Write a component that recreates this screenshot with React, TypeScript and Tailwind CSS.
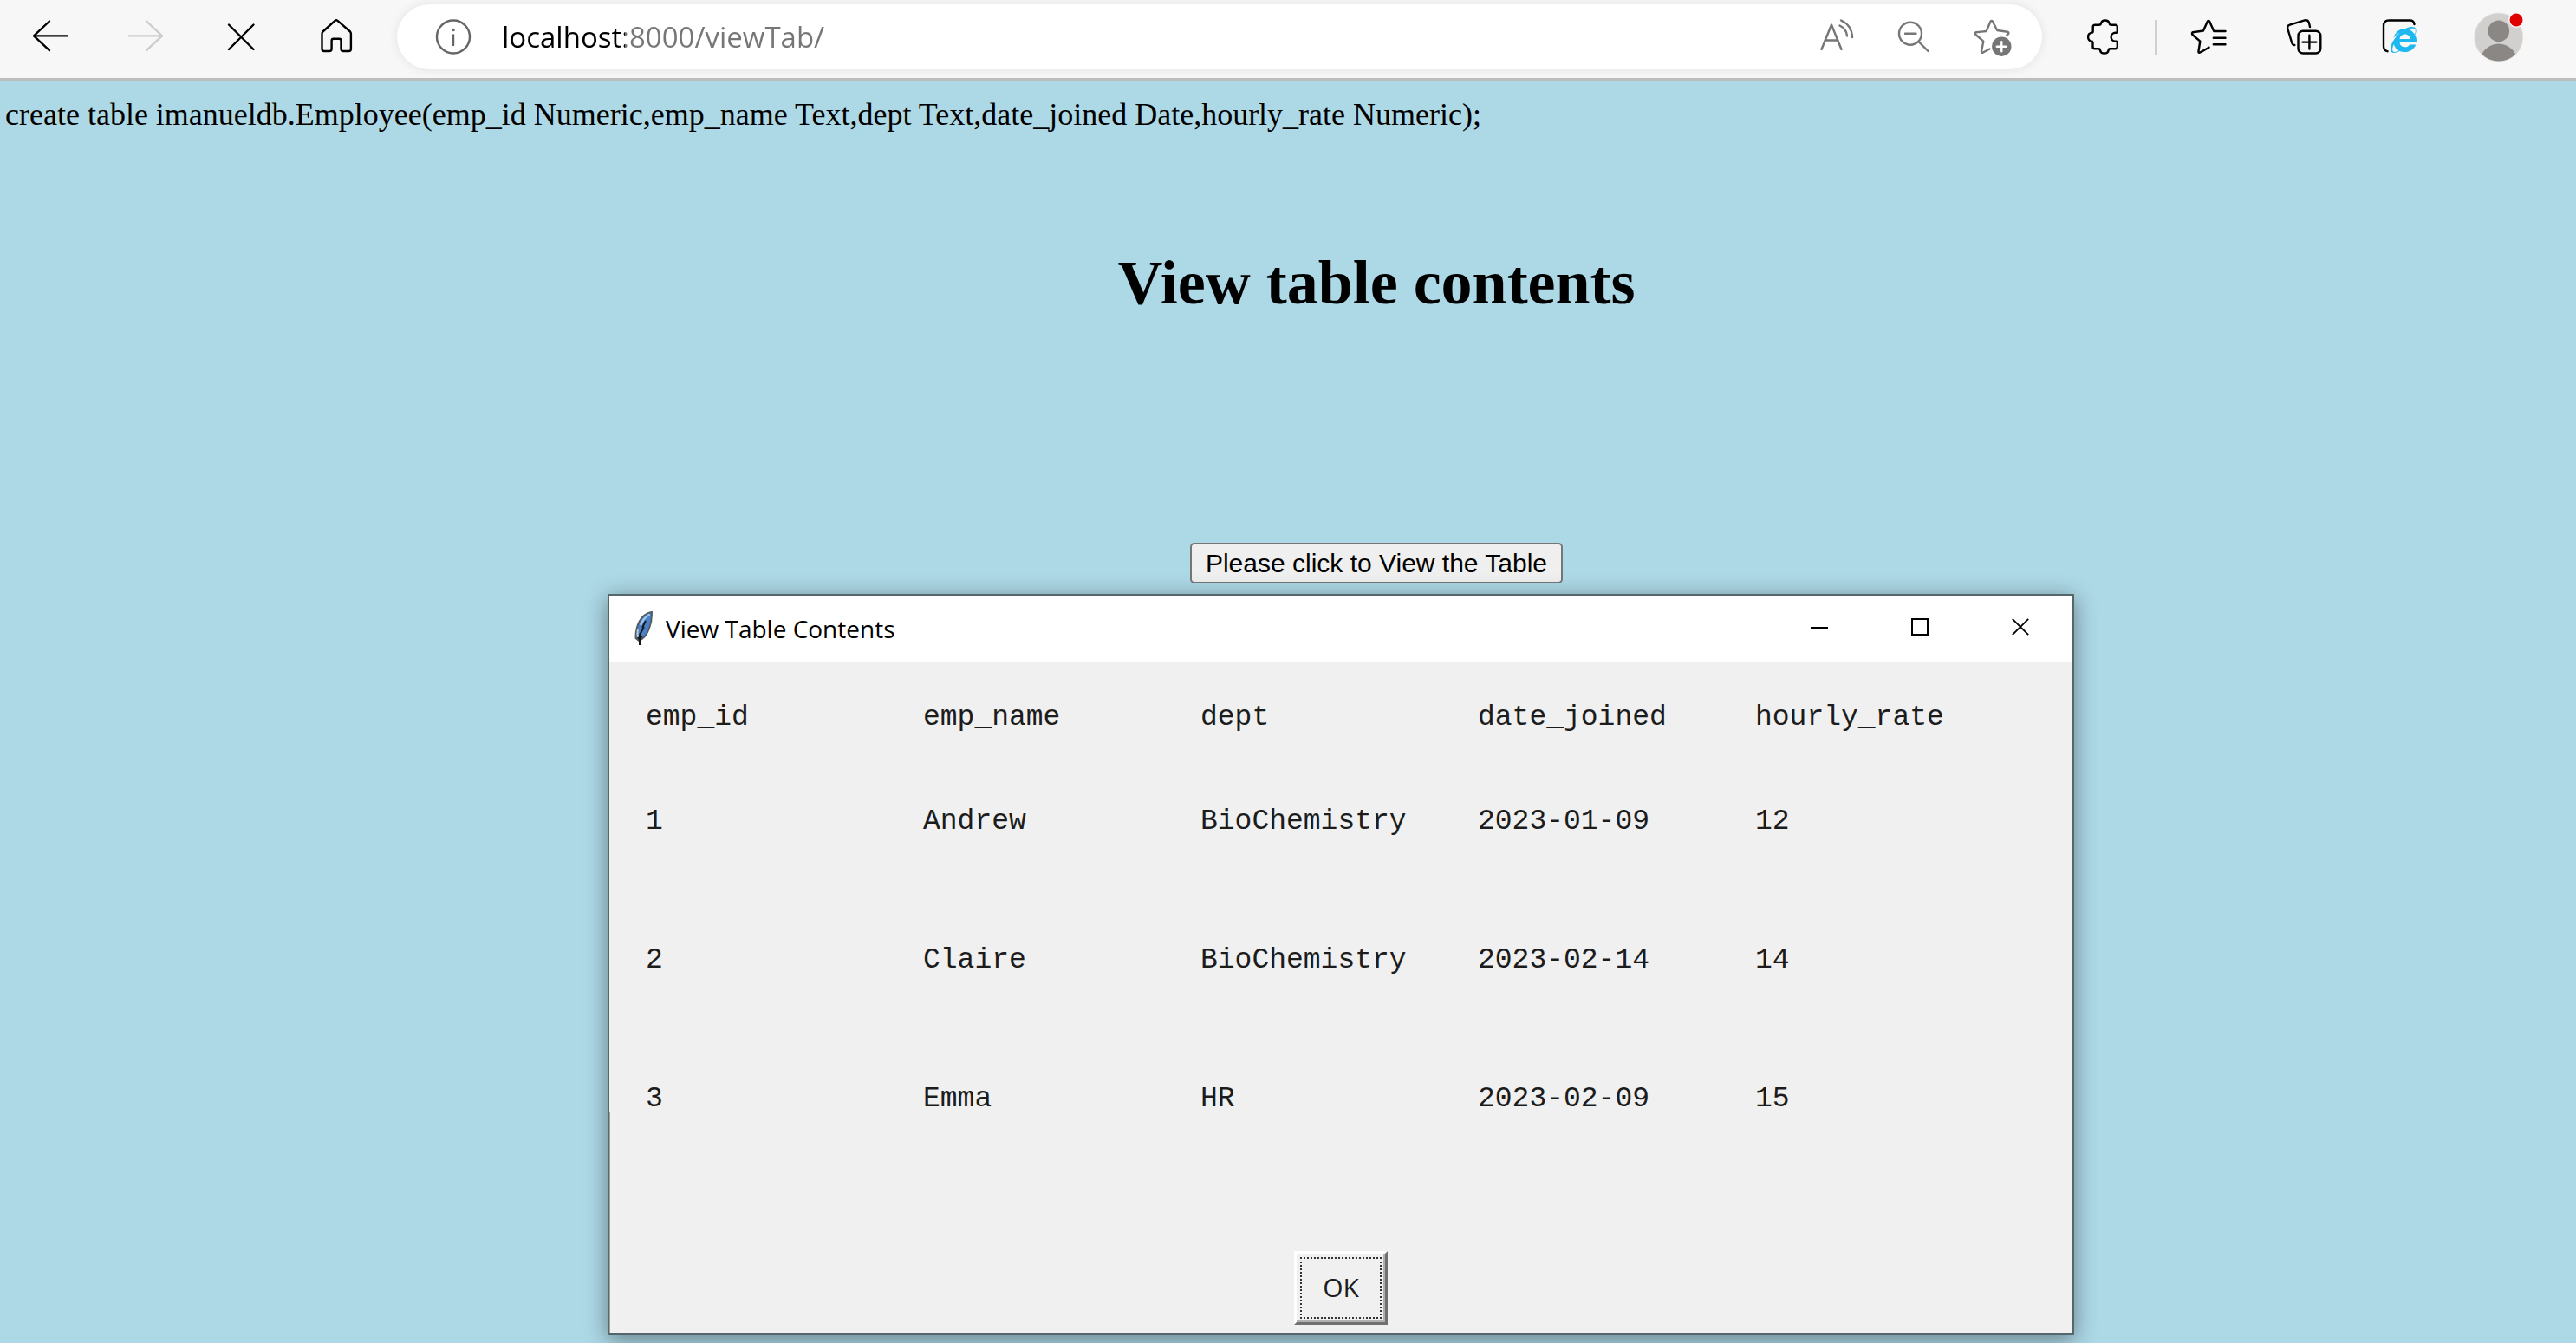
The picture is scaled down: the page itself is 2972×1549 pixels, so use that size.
import type { ReactNode } from "react";
import { FaInternetExplorer } from "react-icons/fa";

const COLUMNS = ["emp_id", "emp_name", "dept", "date_joined", "hourly_rate"];

const ROWS = [
  ["1", "Andrew", "BioChemistry", "2023-01-09", "12"],
  ["2", "Claire", "BioChemistry", "2023-02-14", "14"],
  ["3", "Emma", "HR", "2023-02-09", "15"],
];

function Glyph({ children }: { children: ReactNode }) {
  return (
    <svg
      viewBox="0 0 60 75"
      className="h-[75px] w-[60px] shrink-0"
      fill="none"
      stroke="currentColor"
      strokeWidth="2.4"
      strokeLinecap="round"
      strokeLinejoin="round"
      aria-hidden="true"
    >
      {children}
    </svg>
  );
}

function ToolButton({ label, disabled, children }: { label: string; disabled?: boolean; children: ReactNode }) {
  return (
    <button
      type="button"
      aria-label={label}
      disabled={disabled}
      className="flex w-[110px] shrink-0 justify-center text-black disabled:text-[#cccccc]"
    >
      <Glyph>{children}</Glyph>
    </button>
  );
}

function PillButton({ label, children }: { label: string; children: ReactNode }) {
  return (
    <button type="button" aria-label={label} className="flex w-[90px] shrink-0 justify-center text-[#767676]">
      <Glyph>{children}</Glyph>
    </button>
  );
}

function AddressBar() {
  return (
    <div className="ml-[15px] mr-4 flex min-w-0 flex-1 items-center rounded-full bg-white pl-[35px] pr-[13px] shadow-[0_0_12px_rgba(0,0,0,0.09)]">
      <button type="button" aria-label="View site information" className="text-[#666666]">
        <Glyph>
          <circle cx="30" cy="37.5" r="19" />
          <circle cx="30" cy="29.5" r="1.8" fill="currentColor" stroke="none" />
          <path d="M30 35.5V47" />
        </Glyph>
      </button>
      <input
        type="text"
        aria-label="Address"
        defaultValue="localhost:8000/viewTab/"
        className="ml-[26px] min-w-0 flex-1 bg-[linear-gradient(90deg,#000_142px,#767676_142px)] bg-clip-text font-['Open_Sans',sans-serif] text-[33px] leading-[48px] text-transparent outline-none"
      />
      <PillButton label="Read aloud">
        <path d="M13.5 52L25 23.5L36.5 52M17.5 41.5H32.5" />
        <path d="M34.5 24.5Q42.5 28.5 43 36.5M36 18.5Q48.500 24 49 38" />
      </PillButton>
      <PillButton label="Zoom out">
        <circle cx="26" cy="33.7" r="13" />
        <path d="M20 33.700H32.500M35.500 43L46.500 54" />
      </PillButton>
      <PillButton label="Add to favorites">
        <path d="M47.5 35.3L49.2 34Q49.8 32 48 31.700L36.200 30L31 19.800Q29.700 18.200 28.500 19.800L23.700 31L12 32.200Q10 33 11.500 35L20.300 42.700L18 54.500Q18.300 56.500 20 55.500L27.500 51.500" />
        <circle cx="41.300" cy="48.700" r="11.200" fill="currentColor" stroke="none" />
        <path d="M35.800 48.700H46.800M41.300 43.200V54.200" stroke="#ffffff" />
      </PillButton>
    </div>
  );
}

function BrowserToolbar() {
  return (
    <header className="flex shrink-0 border-b-[3px] border-[#bcbebd] bg-[#f7f7f7] pb-[10px] pl-[3px] pr-[34px] pt-[5px]">
      <ToolButton label="Back">
        <path d="M49.500 36.400H11M29 19.500L11 36.400L29 53.200" />
      </ToolButton>
      <ToolButton label="Forward" disabled>
        <path d="M11 36.400H49M31 19.500L49 36.400L31 53.200" />
      </ToolButton>
      <ToolButton label="Stop">
        <path d="M16 23.500L44.500 52M44.500 23.500L16 52" />
      </ToolButton>
      <ToolButton label="Home">
        <path d="M28.500 18.900Q30 17.700 31.500 18.900L46 31.500Q46.900 32.500 46.900 34V51.500Q46.900 54 44.400 54H38Q35.500 54 35.500 51.500V42Q35.500 39.800 33.300 39.800H26.800Q24.600 39.800 24.600 42V51.500Q24.600 54 22 54H16Q13.500 54 13.500 51.500V34Q13.500 32.500 14.500 31.500Z" />
      </ToolButton>

      <AddressBar />

      <ToolButton label="Extensions">
        <path d="M20 23.700H24.500Q26.800 23.700 27 21.900A4.900 4.300 0 0 1 36.600 21.900Q36.800 23.700 39 23.700H43.500Q45.800 23.700 45.800 26V32.800H43.500A4.900 4.900 0 0 0 43.500 42.600H45.800V49Q45.800 51.300 43.500 51.300H37.500Q35.600 51.300 35.600 53.200A4.900 4.300 0 0 1 26 53.200Q26 51.300 24 51.300H19.800Q17.500 51.300 17.500 49V44.500Q17.500 42.500 15.800 42.400A4.300 4.800 0 0 1 15.800 32.900Q17.700 32.700 17.700 31V26Q17.700 23.700 20 23.700Z" />
      </ToolButton>
      <div className="mx-1 h-10 w-[3px] shrink-0 self-center bg-[#d0d0d0]" />
      <ToolButton label="Favorites">
        <path d="M49.500 31H36.200L31.200 19.800Q30 18.200 28.800 19.800L24 30.500L12 32.200Q10.200 33 11.500 35L20.300 42.700L18.400 54.500Q18.500 56.500 20.300 55.500L30.500 49.700M35.800 38.700H49.500M35.800 46.300H49.500" />
      </ToolButton>
      <ToolButton label="Collections">
        <rect x="23.500" y="30.700" width="25.800" height="25.800" rx="5.500" />
        <path d="M28.500 43.600H44.300M36.400 35.800V51.500" />
        <path d="M19.300 47Q17 47 16.200 44.500L11.400 28.500Q10.300 24.800 13.700 23.700L31 18.400Q34.600 17.600 35.800 20.800L37 26" />
      </ToolButton>
      <ToolButton label="Internet Explorer mode">
        <path d="M47.500 23Q47 18.500 42.500 18.500H18Q12 18.500 12 24.500V48.500Q12 53 16.500 54.200" />
        <FaInternetExplorer x={20} y={26} size={30} color="#1db8f0" stroke="none" />
      </ToolButton>
      <button type="button" aria-label="Profile" className="ml-[5px] flex w-[110px] shrink-0 justify-center">
        <svg viewBox="0 0 60 75" className="h-[75px] w-[60px]" aria-hidden="true">
          <defs>
            <clipPath id="avatar">
              <circle cx="29.800" cy="38" r="27.500" />
            </clipPath>
          </defs>
          <circle cx="29.800" cy="38" r="28" fill="#d2d0ce" stroke="#e4e3e2" />
          <g clipPath="url(#avatar)" fill="#8a8785">
            <circle cx="29.800" cy="30.700" r="12.300" />
            <ellipse cx="29.800" cy="68" rx="22" ry="22.500" />
          </g>
          <circle cx="50" cy="18" r="9" fill="#f7f7f7" />
          <circle cx="50" cy="18" r="7.500" fill="#e00000" />
        </svg>
      </button>
    </header>
  );
}

function Feather() {
  return (
    <svg viewBox="0 0 24 40" className="h-10 w-6 shrink-0" aria-hidden="true">
      <path d="M20 0.800Q11 2.500 6 11Q1 20 1.500 31L5 34Q13 31 17 20Q20.500 11 20 0.800Z" fill="#4a80c4" stroke="#55585e" strokeWidth="1.800" />
      <path d="M17.500 3.500Q10 8 7 16" fill="none" stroke="#9cc4ee" strokeWidth="2.500" />
      <path d="M3.800 21Q3 26 4 30" fill="none" stroke="#b9c9d8" strokeWidth="2" />
      <path d="M13 11L9.500 18L10.500 19L6 27V39" fill="none" stroke="#15181c" strokeWidth="2" />
      <path d="M3 30L6 35L9.500 29" fill="#15181c" />
    </svg>
  );
}

function CaptionButton({ label, children }: { label: string; children: ReactNode }) {
  return (
    <button type="button" aria-label={label} className="flex w-[116px] items-center justify-center">
      <svg viewBox="0 0 20 20" className="mb-1 h-5 w-5" fill="none" stroke="#000000" strokeWidth="2" aria-hidden="true">
        {children}
      </svg>
    </button>
  );
}

function TableWindow() {
  return (
    <section
      aria-label="View Table Contents"
      className="absolute left-[701px] top-[592px] w-[1692px] border-2 border-[#55666c] bg-[#f0f0f0] shadow-[0_5px_24px_rgba(0,0,0,0.42)]"
    >
      <div className="flex h-[76px] bg-white pl-[29px] pr-[2px]">
        <div className="flex flex-1 items-center gap-3">
          <Feather />
          <h2 className="font-['Open_Sans',sans-serif] text-[28px] leading-10 text-black">View Table Contents</h2>
        </div>
        <CaptionButton label="Minimize">
          <path d="M0 11H20" />
        </CaptionButton>
        <CaptionButton label="Maximize">
          <rect x="1" y="1" width="18" height="18" />
        </CaptionButton>
        <CaptionButton label="Close">
          <path d="M0.800 0.800L19.200 19.200M19.200 0.800L0.800 19.200" strokeWidth="1.800" />
        </CaptionButton>
      </div>
      <div className="ml-[520px] h-px bg-[#a3a3a3]" />

      <div className="border-b border-[#a3a3a3] pb-[9px] pt-6">
        <table className="ml-[42px] w-[1600px] table-fixed text-left font-['Liberation_Mono',monospace] text-[33px] leading-10 text-[#1c1c1c]">
          <thead>
            <tr className="h-20">
              {COLUMNS.map((name) => (
                <th key={name} scope="col" className="p-0 font-normal">
                  {name}
                </th>
              ))}
            </tr>
          </thead>
          <tbody>
            {ROWS.map((row) => (
              <tr key={row[0]} className="h-40">
                {row.map((cell, i) => (
                  <td key={COLUMNS[i]} className="p-0">
                    {cell}
                  </td>
                ))}
              </tr>
            ))}
          </tbody>
        </table>
        <div className="mt-[95px] flex justify-center">
          <button
            type="button"
            className="flex h-[85px] w-[108px] border-[3px] border-b-[#707070] border-l-white border-r-[#707070] border-t-white bg-[#f0f0f0] p-1 font-['Open_Sans',sans-serif] text-[30px] leading-10 text-[#1c1c1c] shadow-[inset_-2px_-2px_0_#b0b0b0]"
          >
            <span className="flex h-full w-full items-center justify-center border-2 border-dotted border-[#333333] pb-[2px]">OK</span>
          </button>
        </div>
      </div>
      <span className="absolute bottom-0 left-0 h-[255px] w-px bg-[#a3a3a3]" />
    </section>
  );
}

export default function App() {
  return (
    <div className="flex h-screen flex-col overflow-hidden bg-[#add8e6]">
      <BrowserToolbar />
      <main className="relative flex-1 pt-[18px] font-['Liberation_Serif',serif] text-black">
        <p className="pl-[6px] text-4xl leading-[42px]">
          create table imanueldb.Employee(emp_id Numeric,emp_name Text,dept Text,date_joined Date,hourly_rate Numeric);
        </p>
        <div className="flex flex-col items-center pl-[204px]">
          <h1 className="mt-[132px] text-7xl font-bold leading-[82px]">View table contents</h1>
          <button
            type="button"
            className="mt-[259px] h-[47px] rounded-[5px] border-2 border-[#767676] bg-[#efefef] px-4 font-['Liberation_Sans',sans-serif] text-[30px] leading-10"
          >
            Please click to View the Table
          </button>
        </div>
        <TableWindow />
      </main>
    </div>
  );
}
